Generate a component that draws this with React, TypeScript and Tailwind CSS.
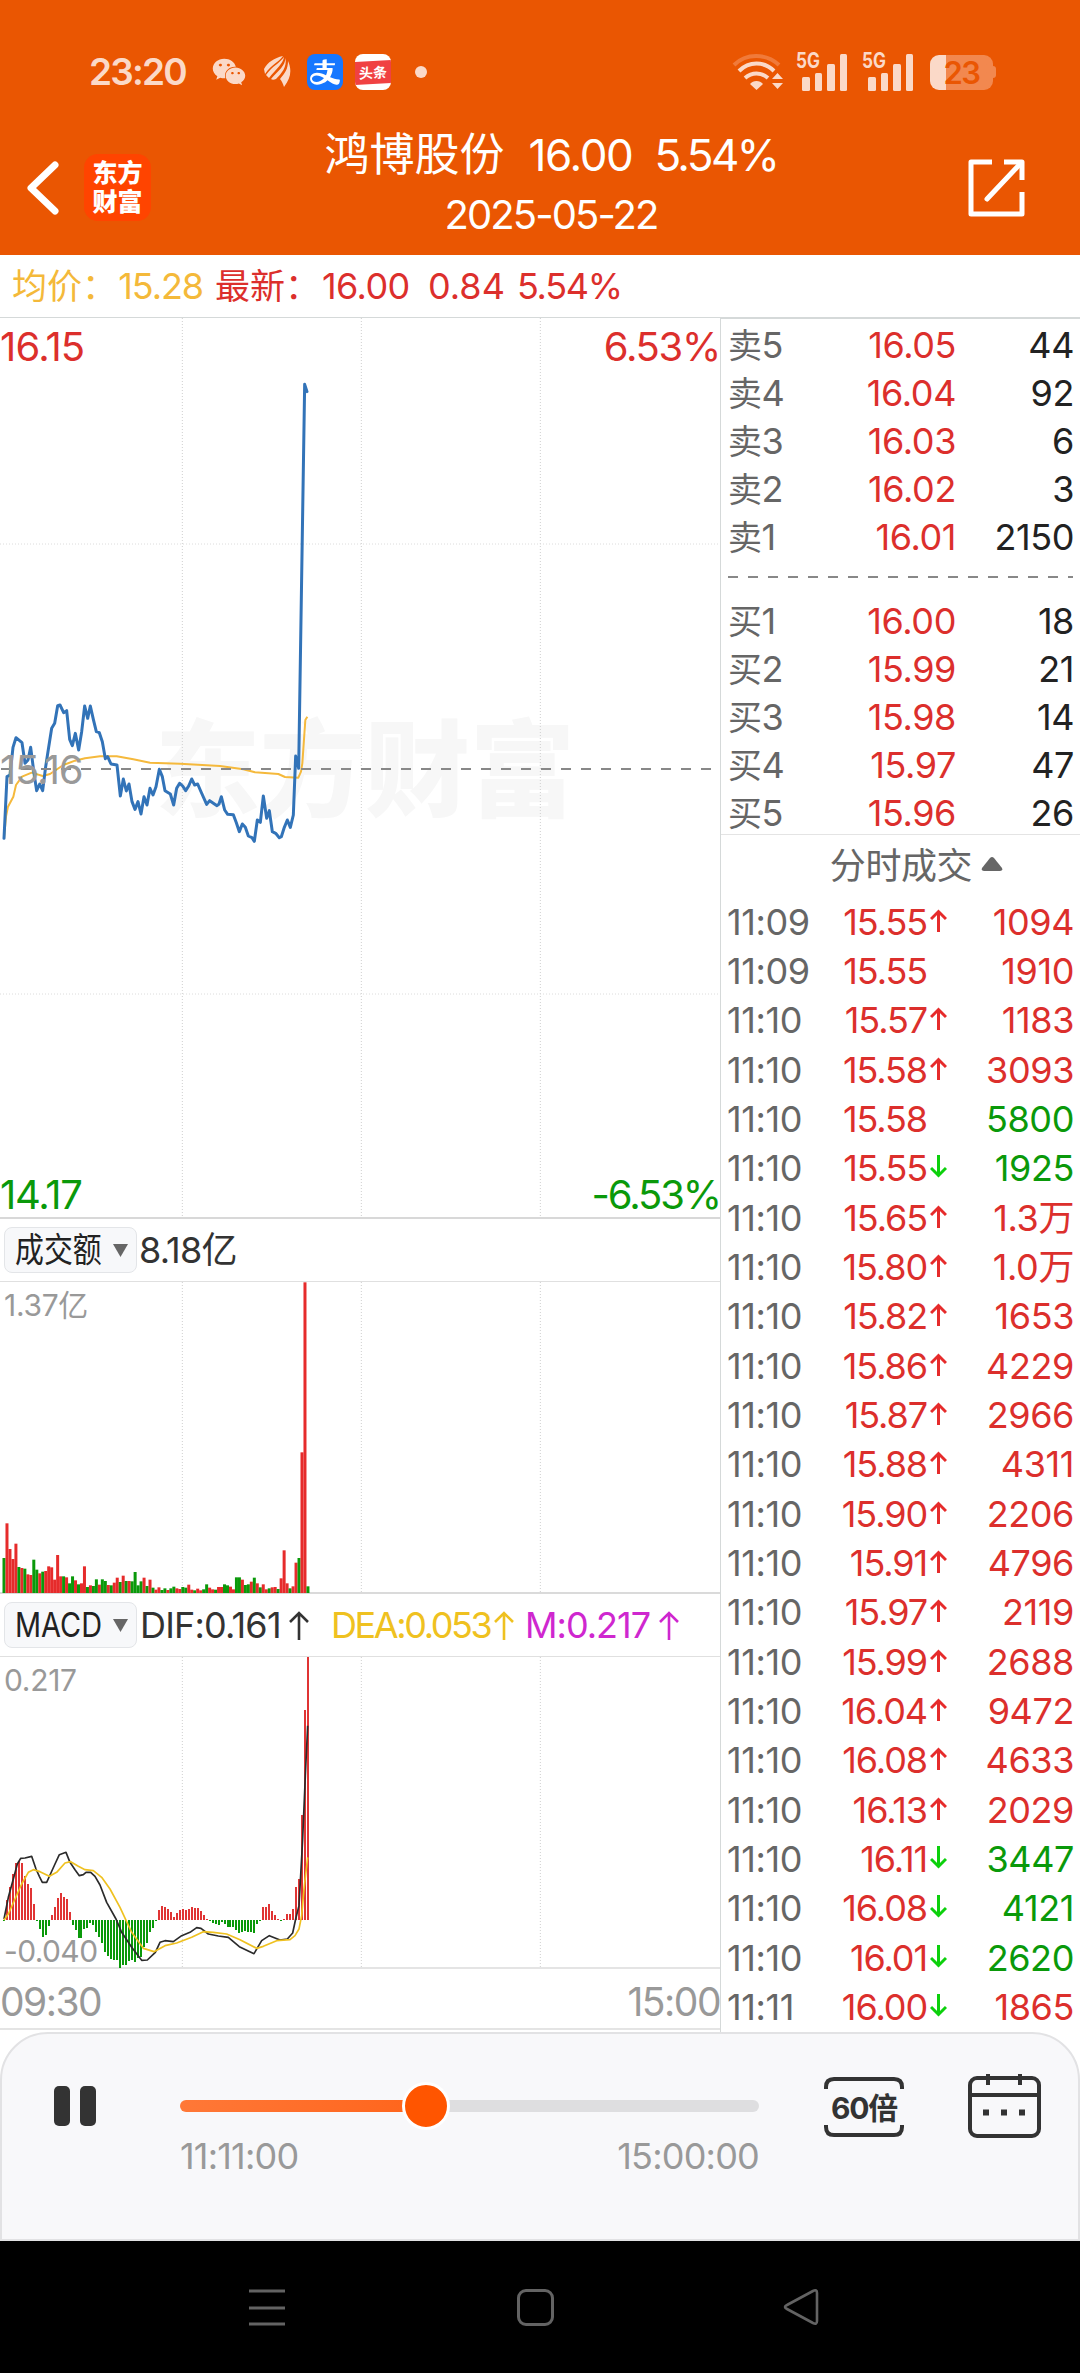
import { AiOutlineAlipay } from "react-icons/ai";
import { FaWeixin } from "react-icons/fa";

interface Quote {
  label: string;
  price: string;
  volume: string;
}

interface Tick {
  time: string;
  price: string;
  dir: "up" | "down" | "";
  volume: string;
  sell?: boolean;
}

const sells: Quote[] = [
  { label: "卖5", price: "16.05", volume: "44" },
  { label: "卖4", price: "16.04", volume: "92" },
  { label: "卖3", price: "16.03", volume: "6" },
  { label: "卖2", price: "16.02", volume: "3" },
  { label: "卖1", price: "16.01", volume: "2150" },
];

const buys: Quote[] = [
  { label: "买1", price: "16.00", volume: "18" },
  { label: "买2", price: "15.99", volume: "21" },
  { label: "买3", price: "15.98", volume: "14" },
  { label: "买4", price: "15.97", volume: "47" },
  { label: "买5", price: "15.96", volume: "26" },
];

const ticks: Tick[] = [
  { time: "11:09", price: "15.55", dir: "up", volume: "1094" },
  { time: "11:09", price: "15.55", dir: "", volume: "1910" },
  { time: "11:10", price: "15.57", dir: "up", volume: "1183" },
  { time: "11:10", price: "15.58", dir: "up", volume: "3093" },
  { time: "11:10", price: "15.58", dir: "", volume: "5800", sell: true },
  { time: "11:10", price: "15.55", dir: "down", volume: "1925", sell: true },
  { time: "11:10", price: "15.65", dir: "up", volume: "1.3万" },
  { time: "11:10", price: "15.80", dir: "up", volume: "1.0万" },
  { time: "11:10", price: "15.82", dir: "up", volume: "1653" },
  { time: "11:10", price: "15.86", dir: "up", volume: "4229" },
  { time: "11:10", price: "15.87", dir: "up", volume: "2966" },
  { time: "11:10", price: "15.88", dir: "up", volume: "4311" },
  { time: "11:10", price: "15.90", dir: "up", volume: "2206" },
  { time: "11:10", price: "15.91", dir: "up", volume: "4796" },
  { time: "11:10", price: "15.97", dir: "up", volume: "2119" },
  { time: "11:10", price: "15.99", dir: "up", volume: "2688" },
  { time: "11:10", price: "16.04", dir: "up", volume: "9472" },
  { time: "11:10", price: "16.08", dir: "up", volume: "4633" },
  { time: "11:10", price: "16.13", dir: "up", volume: "2029" },
  { time: "11:10", price: "16.11", dir: "down", volume: "3447", sell: true },
  { time: "11:10", price: "16.08", dir: "down", volume: "4121", sell: true },
  { time: "11:10", price: "16.01", dir: "down", volume: "2620", sell: true },
  { time: "11:11", price: "16.00", dir: "down", volume: "1865" },
];

const priceLine =
  "12,535 21,350 30,345 39,262 48,233 66,248 75,310 84,300 92,262 102,340 110,392 119,372 128,392 137,320 146,262 155,205 164,190 173,137 180,135 191,158 200,152 209,238 217,257 226,220 236,270 245,215 254,138 263,175 271,138 280,178 289,215 298,218 307,245 316,296 323,290 333,312 351,315 361,408 370,357 379,393 387,372 396,425 405,448 414,425 423,462 432,410 441,435 450,385 459,405 468,380 478,328 487,350 495,392 511,402 521,435 530,385 539,370 548,378 557,392 566,378 575,357 584,375 593,372 602,393 620,433 629,422 651,437 657,432 664,410 674,450 683,463 700,464 709,488 718,515 727,492 736,502 745,528 756,533 763,544 772,480 781,487 790,408 800,475 808,452 817,515 827,520 838,533 844,530 853,502 862,480 871,502 880,465 887,288 896,325 914,-827 921,-805";

const avgLine =
  "12,535 18,470 24,440 40,410 48,375 66,350 95,338 128,348 150,342 190,315 225,302 255,295 300,289 350,289 400,298 450,308 540,311 660,318 730,328 765,337 835,342 855,351 895,353 903,335 907,310 916,180 922,170";

// one bar per minute, negative = falling minute (green)
const turnover = [
  -105, 209, 132, 102, 148, -78, 75, -73, 56, 54, -100, -70, 59, -64, 66, 80,
  77, 40, 114, 50, -50, 47, -29, -50, 38, -26, 29, 80, -18, 23, -21, -41, 25,
  -41, -36, 24, -23, 31, 46, -33, 52, -36, 36, -35, -63, -23, -35, 46, -21, 40,
  -16, 10, 17, -9, -14, 9, -14, -19, 14, 12, -18, -16, 25, 10, -8, 13, 8, -11,
  -26, 16, 11, -10, 18, 18, -26, -23, 19, 11, -47, -47, 40, -24, -26, 34, -46,
  29, -17, 26, 11, -14, 17, 18, -12, 44, 128, 29, -14, 20, 91, -105, 422, 932,
  -20,
];

const macd = [
  0, 60, 100, 138, 171, 176, 171, 133, 108, 96, 47, -2, -27, -52, -44, -18, 16,
  40, 67, 80, 70, 63, 24, -14, -30, -55, -55, -26, -23, -10, -16, -36, -50, -68,
  -96, -108, -116, -119, -119, -143, -135, -134, -122, -120, -126, -115, -110,
  -80, -70, -37, -23, -3, 30, 43, 38, 34, 24, 10, 20, 30, 32, 30, 32, 40, 37,
  37, 28, 16, 2, -4, -9, -12, -14, -5, -12, -20, -22, -22, -30, -39, -36, -32,
  -36, -37, -38, -12, 0, 39, 39, 48, 27, 15, 3, -2, 3, 17, 18, 32, 100, 124,
  315, 630, 790,
];

const difLine =
  "12,990 25,925 40,870 52,825 62,808 75,807 95,802 108,840 118,862 127,880 140,880 150,858 165,825 178,797 198,790 210,820 225,842 238,860 250,857 258,850 272,850 285,862 300,888 320,940 348,990 365,1030 395,1075 425,1114 442,1113 466,1090 480,1060 495,1055 520,1058 545,1040 570,1030 590,1016 603,1018 625,1035 655,1041 685,1045 718,1073 762,1094 785,1055 808,1040 840,1053 862,1050 878,1032 887,990 897,950 908,750 916,560 923,410";

const deaLine =
  "12,993 25,975 45,930 65,885 85,850 100,842 120,848 148,862 170,850 195,822 212,818 235,832 255,842 280,845 305,865 330,900 360,955 395,1030 430,1078 462,1088 495,1070 530,1062 575,1045 610,1028 640,1030 680,1035 720,1052 770,1078 790,1072 830,1055 870,1052 885,1040 897,1020 905,980 912,900 923,805";

const barX = (i: number) => 12 + i * 8.94;

function VerticalGrid({ top, bottom }: { top: number; bottom: number }) {
  return (
    <g stroke="#cfcfcf" strokeWidth="3" strokeDasharray="3 6">
      {[547, 1084, 1621].map((x) => (
        <line key={x} x1={x} x2={x} y1={top} y2={bottom} />
      ))}
    </g>
  );
}

function Signal() {
  return (
    <div className="relative h-[38px] w-[52px]">
      <span className="absolute left-0 top-0 origin-left scale-x-[0.82] text-[21px] leading-[16px] font-bold">
        5G
      </span>
      <svg className="absolute left-[6px] top-0" width="46" height="38" fill="#fbd9c8">
        <rect x="0" y="24" width="8" height="14" rx="1.5" />
        <rect x="13" y="20" width="7" height="18" rx="1.5" />
        <rect x="25" y="11" width="8" height="27" rx="1.5" />
        <rect x="38" y="1" width="7" height="37" rx="1.5" />
      </svg>
    </div>
  );
}

function StatusBar() {
  return (
    <div className="flex h-[144px] items-center pl-[89px] pr-[84px] text-[#fbd9c8]">
      <span className="w-[123px] text-[37px] font-semibold tracking-[-1.8px]">
        23:20
      </span>
      <FaWeixin className="h-[34px] w-[34px]" />
      <svg className="ml-[18px]" width="27" height="32" viewBox="0 0 27 32" fill="#fbd9c8">
        <path d="M0 13C4 6 10 2 19 0C15 6 8 8 1 18Z" />
        <path d="M20 1C19 8 12 13 5 22L2 19C9 9 15 8 20 1Z" />
        <path d="M21.500 2C23 11 18 17 12 23C10 24 8 24 7 23C15 14 21 10 21.500 2Z" />
        <path d="M24 5C28 14 27 22 20 31C19 28 18 25 16 23C21 17 24 13 24 5Z" />
      </svg>
      <div className="ml-[16px] flex h-9 w-9 items-center justify-center rounded-[8px] bg-[#1677ff] text-white">
        <AiOutlineAlipay className="h-[34px] w-[34px]" />
      </div>
      <div className="ml-3 flex h-9 w-9 flex-col justify-center overflow-hidden rounded-[8px] bg-white">
        <div className="flex h-[23px] -skew-y-3 items-center justify-center bg-[#f04142] text-[14px] font-bold text-white">
          头条
        </div>
      </div>
      <div className="ml-6 h-3 w-3 rounded-full bg-[#fbd9c8]" />
      <svg className="ml-auto" width="52" height="38" viewBox="0 0 52 38" fill="none">
        <path d="M2 12C14 0 34 0 47 12" stroke="#f07a3a" strokeWidth="4" />
        <path d="M7 18C17 8 32 8 42 18" stroke="#fbd9c8" strokeWidth="4" />
        <path d="M13 25C20 19 29 19 36 25" stroke="#fbd9c8" strokeWidth="4" />
        <path d="M18 31C21 27 28 27 31 31L24.500 37Z" fill="#fbd9c8" />
        <path d="M40 26L45.500 20L51 26ZM40 30L45.500 36L51 30Z" fill="#fbd9c8" />
      </svg>
      <div className="ml-[12px] flex gap-[14px]">
        <Signal />
        <Signal />
      </div>
      <div className="ml-[16px] flex items-center">
        <div className="flex h-[35px] w-[63px] items-center justify-center rounded-[9px] bg-linear-to-r from-[#fbd9c8] from-25% to-[#f2884f] to-25% text-[31px] leading-none font-semibold tracking-[-1.5px] text-[#ea5602]">
          23
        </div>
        <div className="h-3 w-[3px] rounded-r bg-[#f2884f]" />
      </div>
    </div>
  );
}

function TitleBar() {
  return (
    <div className="flex h-[111px] items-center text-white">
      <svg className="ml-[26px] mt-[-24px]" width="33" height="54" viewBox="0 0 33 54" fill="none">
        <path d="M29 4L5 27L29 50" stroke="#fff" strokeWidth="7" strokeLinecap="round" strokeLinejoin="round" />
      </svg>
      <div className="ml-[25px] mt-[-24px] flex h-[67px] w-[67px] flex-col items-center justify-center rounded-[14px] bg-[#ff4400] text-[25px] leading-[29px] font-black">
        <span>东方</span>
        <span>财富</span>
      </div>
      <div className="ml-[25px] flex w-[750px] flex-col items-center">
        <div className="mt-[-32px] flex h-[62px] items-center whitespace-nowrap text-[44px]">
          <span className="text-[45px]">鸿博股份</span>
          <span className="ml-[24px] tracking-[-1.4px]">16.00</span>
          <span className="ml-[22px] tracking-[-2.6px]">5.54%</span>
        </div>
        <span className="h-[58px] text-[40px] leading-[58px] tracking-[-1.9px]">2025-05-22</span>
      </div>
      <svg className="ml-[41px] mt-[-24px]" width="59" height="60" viewBox="0 0 59 60" fill="none" stroke="#fff" strokeWidth="5" strokeLinejoin="round">
        <path d="M25 4H4V56H55V34" />
        <path d="M37 4H55V22" />
        <path d="M53 6L20 41" strokeLinecap="round" />
      </svg>
    </div>
  );
}

function PriceChart() {
  return (
    <div className="relative h-[901px] border-b-2 border-[#d8d8d8] text-[40px] leading-none">
      <div className="absolute left-[155px] top-[390px] text-[105px] leading-[124px] font-black whitespace-nowrap text-[#f7f7f7]">
        东方财富
      </div>
      <svg className="absolute left-0 top-0" width="720" height="899" viewBox="0 -1026 2160 2697" fill="none">
        <VerticalGrid top={-1026} bottom={1671} />
        <g stroke="#dcdcdc" strokeWidth="3" strokeDasharray="3 6">
          <line x1="0" x2="2160" y1="-348" y2="-348" />
          <line x1="0" x2="2160" y1="1002" y2="1002" />
        </g>
        <polyline points={avgLine} stroke="#f5b93c" strokeWidth="6" strokeLinejoin="round" />
        <polyline points={priceLine} stroke="#3273b8" strokeWidth="9" strokeLinejoin="round" strokeLinecap="round" />
        <line x1="3" x2="2133" y1="327" y2="327" stroke="#888" strokeWidth="6" strokeDasharray="30 30" />
      </svg>
      <span className="absolute left-0 top-[9px] tracking-[-0.8px] text-[#dc2f2c]">16.15</span>
      <span className="absolute right-0 top-[9px] tracking-[-1.3px] text-[#dc2f2c]">6.53%</span>
      <span className="absolute left-0 top-[432px] tracking-[-1.3px] text-[#999]">15.16</span>
      <span className="absolute bottom-[2px] left-0 tracking-[-1.2px] text-[#0a990a]">14.17</span>
      <span className="absolute right-0 bottom-[2px] tracking-[-2.1px] text-[#0a990a]">-6.53%</span>
    </div>
  );
}

function Selector({ text, squeeze }: { text: string; squeeze: string }) {
  return (
    <div className="ml-1 flex h-[46px] w-[133px] items-center rounded-[8px] border border-[#e3e5e8] bg-[#f7f8fa] pl-[10px]">
      <div className="w-[98px] whitespace-nowrap text-[34px] leading-none text-[#222]">
        <span className={`inline-block origin-left ${squeeze}`}>{text}</span>
      </div>
      <svg width="15" height="13">
        <path d="M0 0H15L7.500 13Z" fill="#666" />
      </svg>
    </div>
  );
}

function TurnoverChart() {
  return (
    <>
      <div className="flex h-[63px] items-center border-b border-[#e0e0e0] text-[36px] text-[#333]">
        <Selector text="成交额" squeeze="scale-x-[0.85]" />
        <span className="ml-[2px] tracking-[-0.8px]">8.18亿</span>
      </div>
      <div className="relative h-[312px] border-b-2 border-[#dadada]">
        <svg width="720" height="311" viewBox="0 249 2160 933" className="absolute left-0 top-0">
          <VerticalGrid top={249} bottom={1182} />
          {turnover.map((v, i) => (
            <rect
              key={i}
              x={barX(i) - 4.5}
              y={1182 - Math.abs(v)}
              width="9"
              height={Math.abs(v)}
              fill={v > 0 ? "#e62b2b" : "#0a990a"}
            />
          ))}
        </svg>
        <span className="absolute left-1 top-[5px] text-[30px] leading-[36px] tracking-[-0.3px] text-[#999]">1.37亿</span>
      </div>
    </>
  );
}

function MacdArrow({ className }: { className: string }) {
  return (
    <svg className={className} width="20" height="30" viewBox="0 0 20 30" fill="none" stroke="currentColor" strokeWidth="2.6">
      <path d="M10 30V3M1 12L10 3L19 12" />
    </svg>
  );
}

function MacdChart() {
  return (
    <>
      <div className="flex h-[63px] items-center border-b border-[#e0e0e0] text-[36px] whitespace-nowrap">
        <Selector text="MACD" squeeze="scale-x-[0.85]" />
        <div className="ml-[3px] flex w-[191px] items-center text-[#333]">
          <span className="tracking-[-0.8px]">DIF:0.161</span>
          <MacdArrow className="ml-auto mr-[22px]" />
        </div>
        <div className="flex w-[194px] items-center text-[#efc120]">
          <span className="tracking-[-2.4px]">DEA:0.053</span>
          <MacdArrow className="ml-auto mr-[11px]" />
        </div>
        <div className="flex w-[154px] items-center text-[#cf27cf]">
          <span className="tracking-[-1px]">M:0.217</span>
          <MacdArrow className="ml-auto" />
        </div>
      </div>
      <div className="relative h-[312px] border-b-2 border-[#e4e4e4]">
        <svg width="720" height="311" viewBox="0 204 2160 933" className="absolute left-0 top-0" fill="none">
          <VerticalGrid top={204} bottom={1137} />
          <g shapeRendering="crispEdges">
            {macd.map((v, i) => (
              <rect
                key={i}
                x={barX(i) - 3}
                y={v > 0 ? 993 - v : 993}
                width="6"
                height={Math.max(Math.abs(v), 2)}
                fill={v > 0 ? "#e03434" : "#0a990a"}
              />
            ))}
          </g>
          <polyline points={difLine} stroke="#2b2b2b" strokeWidth="5" strokeLinejoin="round" />
          <polyline points={deaLine} stroke="#efc120" strokeWidth="5" strokeLinejoin="round" />
        </svg>
        <span className="absolute left-1 top-[5px] text-[30px] leading-[36px] tracking-[-0.3px] text-[#999]">0.217</span>
        <span className="absolute -bottom-[2px] left-1 text-[30px] leading-[36px] tracking-[-0.6px] text-[#999]">-0.040</span>
      </div>
      <div className="flex h-[61px] items-center justify-between border-b-2 border-[#e4e4e4] pt-[7px] text-[39px] tracking-[-1.5px] text-[#999]">
        <span>09:30</span>
        <span>15:00</span>
      </div>
    </>
  );
}

function QuoteRow({ quote }: { quote: Quote }) {
  return (
    <div className="flex h-12 items-center pl-[7px] pr-[6px] text-[36px] tracking-[-0.4px]">
      <span className="w-[90px] text-[#666]">
        <span className="text-[34px]">{quote.label[0]}</span>
        {quote.label[1]}
      </span>
      <span className="w-[138px] text-right text-[#dc2f2c]">{quote.price}</span>
      <span className="flex-1 text-right text-[#222]">{quote.volume}</span>
    </div>
  );
}

function TickRow({ tick }: { tick: Tick }) {
  return (
    <div className="flex h-[49.34px] items-center pl-[6px] pr-[6px] text-[36px] tracking-[-0.4px]">
      <span className="w-[90px] text-[#666]">{tick.time}</span>
      <span className="w-[110px] text-right tracking-[-1.1px] text-[#dc2f2c]">{tick.price}</span>
      <span className="ml-[3px] w-[20px]">
        {tick.dir === "up" && (
          <svg width="17" height="23" viewBox="0 0 17 23" fill="none" stroke="#e62b2b" strokeWidth="3" className="mt-[-3px]">
            <path d="M8.500 23V3M1 10L8.500 2.500L16 10" />
          </svg>
        )}
        {tick.dir === "down" && (
          <svg width="17" height="23" viewBox="0 0 17 23" fill="none" stroke="#0cd00c" strokeWidth="3" className="mt-[-3px]">
            <path d="M8.500 0V20M1 13L8.500 20.500L16 13" />
          </svg>
        )}
      </span>
      <span className={`flex-1 text-right ${tick.sell ? "text-[#0a990a]" : "text-[#dc2f2c]"}`}>
        {tick.volume}
      </span>
    </div>
  );
}

function OrderBook() {
  return (
    <div className="h-[1715px] w-[360px] overflow-hidden border-l border-t-2 border-[#d5d9d9]">
      <div className="h-[516px] border-b border-[#e4e4e4] pt-[2px]">
        {sells.map((q) => (
          <QuoteRow key={q.label} quote={q} />
        ))}
        <svg className="block" width="359" height="36">
          <line x1="7" x2="352" y1="16" y2="16" stroke="#888" strokeWidth="2" strokeDasharray="10 10" />
        </svg>
        {buys.map((q) => (
          <QuoteRow key={q.label} quote={q} />
        ))}
      </div>
      <div className="flex h-[62px] items-center justify-center gap-[9px] pl-[32px] text-[36px] tracking-[-0.4px] text-[#666]">
        分时成交
        <svg width="22" height="14" className="mt-[-5px]">
          <path d="M9 1Q11 -1 13 1L21 11Q22 14 19 14H3Q0 14 1 11Z" fill="#666" />
        </svg>
      </div>
      {ticks.map((t, i) => (
        <TickRow key={i} tick={t} />
      ))}
    </div>
  );
}

function Player() {
  return (
    <div className="flex h-[209px] items-start rounded-t-[48px] border-2 border-[#e2e2e4] bg-[#f8f8fa] pt-[37px]">
      <div className="ml-[52px] mt-[15px] flex gap-[10px]">
        <div className="h-10 w-4 rounded-[5px] bg-[#333]" />
        <div className="h-10 w-4 rounded-[5px] bg-[#333]" />
      </div>
      <div className="ml-[84px] mt-[11px] w-[579px]">
        <div className="relative flex h-12 items-center">
          <div className="h-3 w-[246px] rounded-l-full bg-linear-to-r from-[#ff7837] to-[#ff6419]" />
          <div className="h-3 flex-1 rounded-r-full bg-[#dedee0]" />
          <div className="absolute left-[222px] top-0 h-12 w-12 rounded-full border-3 border-white bg-[#ff5500]" />
        </div>
        <div className="mt-[1px] flex justify-between text-[36px] leading-[50px] tracking-[-0.8px] text-[#999]">
          <span>11:11:00</span>
          <span>15:00:00</span>
        </div>
      </div>
      <div className="relative ml-[65px] mt-[5px] h-[62px] w-[80px]">
        <svg className="absolute left-0 top-0" width="80" height="62" fill="none" stroke="#333" strokeWidth="4">
          <path d="M2 13V11Q2 3 10 3H70Q78 3 78 11V13" />
          <path d="M2 49V51Q2 59 10 59H70Q78 59 78 51V49" />
        </svg>
        <div className="flex h-full items-center justify-center pt-[3px] text-[30px] font-bold tracking-[-1.2px] text-[#333]">
          60倍
        </div>
      </div>
      <svg className="ml-[64px] mt-[2px]" width="73" height="65" fill="none" stroke="#333" strokeWidth="4">
        <rect x="2" y="5" width="69" height="58" rx="7" />
        <path d="M2 22H71M20 1V12M52 1V12" />
        <path d="M15 39.500H21M33 39.500H39M51 39.500H57" strokeWidth="6" />
      </svg>
    </div>
  );
}

function NavBar() {
  return (
    <div className="flex h-[132px] items-center bg-black pl-[248px] text-[#636363]">
      <svg width="38" height="38" stroke="currentColor" strokeWidth="3">
        <path d="M1 3H37M1 20H37M1 36H37" />
      </svg>
      <div className="ml-[231px] h-[37px] w-[37px] rounded-[9px] border-3 border-[#636363]" />
      <svg className="ml-[228px]" width="38" height="38" fill="none" stroke="currentColor" strokeWidth="2.6" strokeLinejoin="round">
        <path d="M5 17L31 3Q35 1 35 5V33Q35 37 31 35L5 21Q1 19 5 17Z" />
      </svg>
    </div>
  );
}

export default function App() {
  return (
    <div className="h-[2373px] w-[1080px] overflow-hidden bg-white font-['Inter','Noto_Sans_CJK_SC',sans-serif]">
      <header className="h-[255px] bg-[#ea5602]">
        <StatusBar />
        <TitleBar />
      </header>
      <div className="flex h-[62px] items-center pl-[12px] text-[36px] whitespace-nowrap text-[#dc2f2c]">
        <div className="flex w-[203px] items-center justify-between text-[#f4b93a]">
          <span className="text-[35px]">均价：</span>
          <span className="mr-[12px] tracking-[-1.1px]">15.28</span>
        </div>
        <span className="w-[107px] text-[35px]">最新：</span>
        <span className="w-[106px] tracking-[-0.6px]">16.00</span>
        <span className="w-[89px]">0.84</span>
        <span className="tracking-[-1.3px]">5.54%</span>
      </div>
      <main className="flex h-[1715px]">
        <div className="w-[720px] border-t border-[#d5d9d9]">
          <PriceChart />
          <TurnoverChart />
          <MacdChart />
        </div>
        <OrderBook />
      </main>
      <Player />
      <NavBar />
    </div>
  );
}
